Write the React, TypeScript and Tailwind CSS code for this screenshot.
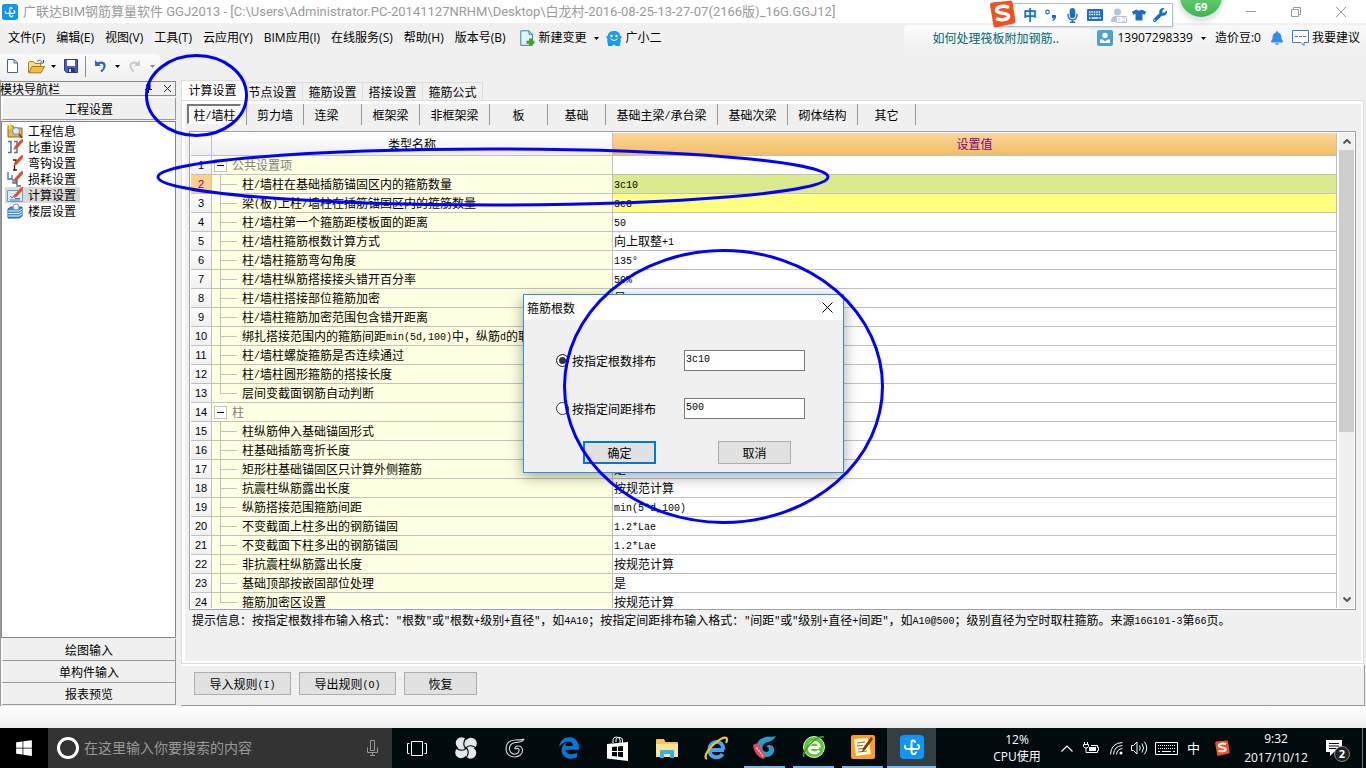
import { useState } from 'react';
import type { ReactNode } from 'react';
import clsx from 'clsx';
import { FaBell, FaEdgeLegacy, FaMicrophone, FaTshirt, FaWindows, FaWrench } from 'react-icons/fa';

const menus = ['文件(F)', '编辑(E)', '视图(V)', '工具(T)', '云应用(Y)', 'BIM应用(I)', '在线服务(S)', '帮助(H)', '版本号(B)'];

const tabs = ['计算设置', '节点设置', '箍筋设置', '搭接设置', '箍筋公式'];

const parts = [
  { name: '剪力墙', width: 'w-[58px] border-l' },
  { name: '连梁', width: 'w-[58px] pr-3' },
  { name: '框架梁', width: 'w-[58px]' },
  { name: '非框架梁', width: 'w-[70px]' },
  { name: '板', width: 'w-[58px]' },
  { name: '基础', width: 'w-[58px]' },
  { name: '基础主梁/承台梁', width: 'w-[112px]' },
  { name: '基础次梁', width: 'w-[70px]' },
  { name: '砌体结构', width: 'w-[70px]' },
  { name: '其它', width: 'w-[58px]' },
];

const rows = [
  { name: '公共设置项', group: true, value: '' },
  { name: '柱/墙柱在基础插筋锚固区内的箍筋数量', value: '3c10' },
  { name: '梁(板)上柱/墙柱在插筋锚固区内的箍筋数量', value: '3c8' },
  { name: '柱/墙柱第一个箍筋距楼板面的距离', value: '50' },
  { name: '柱/墙柱箍筋根数计算方式', value: '向上取整+1' },
  { name: '柱/墙柱箍筋弯勾角度', value: '135°' },
  { name: '柱/墙柱纵筋搭接接头错开百分率', value: '50%' },
  { name: '柱/墙柱搭接部位箍筋加密', value: '是' },
  { name: '柱/墙柱箍筋加密范围包含错开距离', value: '是' },
  { name: '绑扎搭接范围内的箍筋间距min(5d,100)中，纵筋d的取值', value: '' },
  { name: '柱/墙柱螺旋箍筋是否连续通过', value: '是' },
  { name: '柱/墙柱圆形箍筋的搭接长度', value: '' },
  { name: '层间变截面钢筋自动判断', value: '是', last: true },
  { name: '柱', group: true, value: '' },
  { name: '柱纵筋伸入基础锚固形式', value: '' },
  { name: '柱基础插筋弯折长度', value: '' },
  { name: '矩形柱基础锚固区只计算外侧箍筋', value: '是' },
  { name: '抗震柱纵筋露出长度', value: '按规范计算' },
  { name: '纵筋搭接范围箍筋间距', value: 'min(5*d,100)' },
  { name: '不变截面上柱多出的钢筋锚固', value: '1.2*Lae' },
  { name: '不变截面下柱多出的钢筋锚固', value: '1.2*Lae' },
  { name: '非抗震柱纵筋露出长度', value: '按规范计算' },
  { name: '基础顶部按嵌固部位处理', value: '是' },
  { name: '箍筋加密区设置', value: '按规范计算', last: true },
];

// Latin runs are half the width of a Chinese character
function Song({ children }: { children: string }) {
  return (
    <>
      {children.split(/([\x20-\x7e°]+)/).map((run, i) =>
        i % 2 ? (
          <span key={i} className="align-[1px] font-['Liberation_Mono'] text-[10px] leading-none">{run}</span>
        ) : (
          run
        )
      )}
    </>
  );
}

function Caret({ className = 'fill-black' }: { className?: string }) {
  return (
    <svg className={clsx('h-[3px] w-[5px] shrink-0', className)} viewBox="0 0 5 3">
      <path d="M0 0h5L2.5 3z" />
    </svg>
  );
}

function AppLogo({ className }: { className: string }) {
  return (
    <svg className={className} viewBox="0 0 24 24">
      <rect width="24" height="24" rx="4" fill="#0d95f7" />
      <g fill="none" stroke="#fff" strokeWidth="2" strokeLinecap="round">
        <path d="M5 11c-.5 2.500 1 3 3 3h9c2.500 0 3-3 1-4" />
        <path d="M15 7c-.5-2-3.500-2-3.500.5v9c0 3 3.500 3.500 4.500 1" />
      </g>
    </svg>
  );
}

function Sogou({ className }: { className: string }) {
  return (
    <svg className={className} viewBox="0 0 28 28">
      <path d="M2 5Q2 3 4 2.600L22 .8q2-.2 2.500 1.500L27.500 21q.2 2-1.500 2.500L8 27.500q-2 .3-2.500-1.500z" fill="#f4511e" />
      <path d="M21 7.500C16 5 8.500 6.500 8.500 10.200c0 4.300 12 1.800 12 6 0 3.600-8 4.600-12.500 2.300" fill="none" stroke="#fff" strokeWidth="3.600" />
    </svg>
  );
}

function TitleBar() {
  return (
    <header className="relative flex h-[23px] shrink-0 items-center bg-white pl-[2px]">
      <AppLogo className="size-4" />
      <h1 className="ml-[5px] whitespace-nowrap font-['Roboto','Noto_Sans_CJK_SC',sans-serif] text-[13px] text-[#999]">
        广联达BIM钢筋算量软件 GGJ2013 - [C:\Users\Administrator.PC-20141127NRHM\Desktop\白龙村-2016-08-25-13-27-07(2166版)_16G.GGJ12]
      </h1>
      <div className="ml-auto flex items-center gap-[35px] pr-5">
        <button aria-label="最小化" className="h-px w-[10px] bg-[#999]" />
        <button aria-label="还原">
          <svg className="size-[10px]" viewBox="0 0 10 10" fill="none" stroke="#999">
            <path d="M.5 2.500h7v7h-7zM2.500 2.500v-2h7v7h-2" />
          </svg>
        </button>
        <button aria-label="关闭">
          <svg className="size-[10px]" viewBox="0 0 10 10" fill="none" stroke="#999">
            <path d="M0 0l10 10M10 0L0 10" />
          </svg>
        </button>
      </div>

      {/* Input method bar */}
      <div className="absolute right-[193px] top-[3px] z-20 flex h-6 w-[174px] items-center border border-[#a9c0dc] bg-white pl-[14px] text-[#1a6fc4] shadow-sm">
        <Sogou className="absolute -left-[12px] -top-[4px] size-[28px]" />
        <span className="ml-[9px] w-[14px] text-[14px] font-bold leading-none">中</span>
        <svg className="ml-2 h-[12px] w-[12px]" viewBox="0 0 12 12">
          <circle cx="2.500" cy="3" r="1.800" fill="none" stroke="#1a6fc4" strokeWidth="1.200" />
          <path d="M7 6h4v2.500Q10.500 11 7.500 12l-.3-1Q8.800 10.200 8.800 9H7z" fill="#1a6fc4" />
        </svg>
        <FaMicrophone className="ml-2 size-[15px]" />
        <svg className="ml-[7px] h-[12px] w-4" viewBox="0 0 16 12" fill="none" stroke="#fff">
          <rect width="16" height="12" rx="1" fill="#1a6fc4" stroke="none" />
          <path d="M2 3h12M2 5.500h12" strokeWidth="1.500" strokeDasharray="1.500 .9" />
          <path d="M2 9h1.500m1 0h7m1 0H14" strokeWidth="1.500" />
        </svg>
        <svg className="ml-[8px] h-[15px] w-[16px]" viewBox="0 0 16 15">
          <circle cx="6.500" cy="4" r="3.500" fill="#b8c4d6" />
          <path d="M0 14c0-6 3-6 6.500-6 2 0 3 0 4 1v5z" fill="#b8c4d6" />
          <path d="M5.500 8.500h10v6h-10z" fill="#fff" stroke="#b8c4d6" />
          <path d="M8 10v3m3-3h3m-3 3h3" stroke="#b8c4d6" />
        </svg>
        <FaTshirt className="ml-[5px] size-[14px]" />
        <FaWrench className="ml-[7px] size-[14px]" />
      </div>
      <div className="absolute -top-[27px] right-[142px] z-20 flex size-[46px] items-end justify-center rounded-full border-2 border-[#e4e4e4] bg-gradient-to-b from-[#8fdc8f] to-[#36b850] pb-[4px] text-[11px] font-bold leading-[12px] text-white shadow-md">
        69
      </div>
    </header>
  );
}

function MenuBar() {
  return (
    <nav className="flex h-[31px] shrink-0 items-center whitespace-nowrap pb-px pl-2">
      <div className="flex gap-[11px]">
        {menus.map((menu) => (
          <button key={menu}>{menu}</button>
        ))}
      </div>
      <button className="ml-[14px] flex items-center">
        <svg className="h-4 w-[15px]" viewBox="0 0 15 16">
          <path d="M.8.800h8.200l3.500 3.500v11H.8z" fill="#e3f3fd" stroke="#2f84b8" />
          <path d="M9 .8v3.500h3.500" fill="none" stroke="#2f84b8" />
          <path d="M9 8.500h3v2.200h2.500v3H12V16H9v-2.300H6.500v-3H9z" fill="#3da51e" />
        </svg>
        <span className="ml-[4px]">新建变更</span>
        <span className="ml-[7px]"><Caret /></span>
      </button>
      <button className="ml-[7px] flex items-center gap-[4px]">
        <svg className="h-[15px] w-4" viewBox="0 0 16 15">
          <path d="M8 0c4 0 6 2 6.300 5l1.700.5-1.500 2.500c1 3-1 5-.5 7H10l-2-1.500L6 15H2c.5-2-1.500-4-.5-7L0 5.500 1.700 5C2 2 4 0 8 0z" fill="#1d9be8" />
          <circle cx="5.500" cy="5" r="1.200" fill="#fff" />
          <circle cx="10.500" cy="5" r="1.200" fill="#fff" />
          <path d="M4.500 7.500c1 2.500 6 2.500 7 0" fill="none" stroke="#fff" />
        </svg>
        广小二
      </button>

      <div className="ml-auto flex h-[26px] w-[187px] items-center rounded-tl bg-gradient-to-b from-[#fcfcfc] to-[#f0f0f0] pl-7 font-['Noto_Sans_CJK_SC'] text-[#006868]">
        <a href="#help">如何处理筏板附加钢筋..</a>
      </div>
      <div className="ml-px flex h-[26px] items-center bg-gradient-to-b from-[#f8f8f8] to-[#f0f0f0] pl-[5px] pr-[6px]">
        <svg className="size-4" viewBox="0 0 16 16">
          <rect width="16" height="16" rx="2" fill="#4da3cf" />
          <circle cx="8" cy="5.500" r="2.700" fill="#fff" />
          <path d="M3 13V9.500h2.500L8 11.500l2.500-2H13V13z" fill="#fff" />
        </svg>
        <span className="ml-1">13907298339</span>
        <span className="ml-2"><Caret /></span>
        <span className="ml-[9px]">造价豆:0</span>
        <FaBell className="ml-[9px] size-[14px] fill-[#2f8cf0]" />
        <svg className="ml-[8px] h-4 w-[17px]" viewBox="0 0 17 16" fill="none" stroke="#2f7fd0">
          <path d="M.5.500h16v12h-4.500v3l-3-3H.5z" fill="#fff" />
          <path d="M3 6.500h11" strokeDasharray="3 1" />
        </svg>
        <a href="#feedback" className="ml-[3px]">我要建议</a>
      </div>
    </nav>
  );
}

function ToolBar() {
  return (
    <div className="flex h-[26px] w-[160px] shrink-0 items-center rounded-r bg-gradient-to-b from-[#fbfbfb] to-[#f0f0f0] pb-[2px] pl-[7px]">
      <button aria-label="新建">
        <svg className="h-[14px] w-[11px]" viewBox="0 0 11 14">
          <path d="M.5.500h6.500l3.500 3.500v9.500H.5z" fill="#fff" stroke="#46618f" />
          <path d="M7 .5V4h3.500" fill="none" stroke="#46618f" />
        </svg>
      </button>
      <button aria-label="打开" className="ml-[10px] flex items-center gap-[6px]">
        <svg className="h-[15px] w-[17px]" viewBox="0 0 17 15">
          <path d="M.5 13.500v-10l1-1h4l1.500 2h5.500v3" fill="#f8dd84" stroke="#a87916" />
          <path d="M.8 13.800L4 7.500h12.500l-3.500 6.300z" fill="#f2bd3a" stroke="#a87916" />
          <path d="M9 2.500c2-2 4-1.500 5 .5m1.500-2v3H12" fill="none" stroke="#38588c" />
        </svg>
        <Caret />
      </button>
      <button aria-label="保存" className="ml-[8px]">
        <svg className="size-[14px]" viewBox="0 0 14 14">
          <path d="M.5.500h13v13h-11l-2-2z" fill="#4a5fc8" stroke="#2b388f" />
          <path d="M3 1h8v6H3z" fill="#fff" />
          <path d="M4 9h7v4.500H4z" fill="#28357c" />
          <path d="M5 10h2v3H5z" fill="#dfe5f8" />
        </svg>
      </button>
      <span className="ml-[7px] h-[21px] w-px bg-[#8a8a8a]" />
      <button aria-label="撤销" className="ml-[8px] flex items-center gap-[9px]">
        <svg className="h-[12px] w-[12px]" viewBox="0 0 12 12" fill="none" stroke="#2f63c4" strokeWidth="2.200">
          <path d="M2 5.500C5 1 11 2 10.500 6.500 10.300 9 8.500 10.500 7 11.500" />
          <path d="M1 0v6h6z" fill="#2f63c4" stroke="none" />
        </svg>
        <Caret />
      </button>
      <button aria-label="重做" className="ml-[9px] flex items-center gap-[9px]">
        <svg className="h-[12px] w-[12px]" viewBox="0 0 12 12" fill="none" stroke="#c8c8c8" strokeWidth="2">
          <path d="M10 5.500C7 1 1 2 1.500 6.500 1.700 9 3.500 10.500 5 11.500" />
          <path d="M11 0v6H5z" fill="#c8c8c8" stroke="none" />
        </svg>
        <Caret className="fill-[#888]" />
      </button>
    </div>
  );
}

const pencil = (
  <path d="M15.500 0L16 2.500 9.500 9.500 7 10.500 7.500 8 14 1z" fill="#e4472b" stroke="#e4472b" strokeWidth=".6" />
);

const treeItems: { name: string; icon: ReactNode }[] = [
  {
    name: '工程信息',
    icon: (
      <>
        <path d="M1 3h5l1 2h8v9H1z" fill="#e9b64a" stroke="#94671a" />
        <path d="M0 1l5 4M4 0L2 6" stroke="#ffd93b" strokeWidth="1.500" />
        <circle cx="9" cy="8" r="3.500" fill="#d8ebfb" stroke="#6d8bb0" />
        <path d="M12 11l3 4" stroke="#6b4a2a" strokeWidth="2" />
      </>
    ),
  },
  {
    name: '比重设置',
    icon: (
      <>
        <path d="M1 2.500h3v11H1M7 2.500h3v11H7" fill="none" stroke="#4a6da8" strokeWidth="1.400" />
        {pencil}
      </>
    ),
  },
  {
    name: '弯钩设置',
    icon: (
      <>
        <path d="M6 5h3v4M7.500 10v5M6 15h4" fill="none" stroke="#222" strokeWidth="1.400" />
        {pencil}
      </>
    ),
  },
  {
    name: '损耗设置',
    icon: (
      <>
        <path d="M1 1v7h4V4M6 8v4h3V9m1 0v6h4" fill="none" stroke="#4a6da8" strokeWidth="1.300" />
        {pencil}
      </>
    ),
  },
  {
    name: '计算设置',
    icon: (
      <>
        <path d="M.5 3.500h15v11H.5z" fill="#dcebfa" stroke="#6f97c9" />
        <path d="M3 9l2 2 2.500-3M8 11.500h5M3 13h10" fill="none" stroke="#3f73b8" />
        {pencil}
      </>
    ),
  },
  {
    name: '楼层设置',
    icon: (
      <>
        <path d="M1 6l3-2h11v9l-3 2H1z" fill="#3d8fd6" stroke="#1f5f9c" />
        <path d="M1 8h11l3-2M1 10.500h11l3-2M1 13h11l3-2" fill="none" stroke="#e2f1fd" />
        <circle cx="9" cy="4" r="3" fill="#e6f0f8" stroke="#8899aa" />
      </>
    ),
  },
];

function Sidebar() {
  const [selected, setSelected] = useState('计算设置');
  const bar = 'block h-[22px] w-full border-b border-r border-[#999] border-l-2 border-l-white text-center leading-[20px]';
  return (
    <aside className="flex w-[176px] shrink-0 flex-col border-l border-[#999] pb-px pt-px">
      <div className="flex h-[15px] items-center border border-l-0 border-[#888] pr-[3px]">
        <span className="-ml-px leading-none">模块导航栏</span>
        <button aria-label="固定" className="ml-auto">
          <svg className="h-[9px] w-[7px]" viewBox="0 0 7 9">
            <path d="M1.500 0h4v5H7v1H4v3H3V6H0V5h1.500z" />
          </svg>
        </button>
        <button aria-label="关闭" className="ml-[11px]">
          <svg className="size-[9px]" viewBox="0 0 9 9" stroke="#222">
            <path d="M1 1l7 7M8 1L1 8" />
          </svg>
        </button>
      </div>
      <button className="mt-px block h-[23px] w-full border border-[#999] border-l-2 border-l-white border-t-white text-center leading-[20px]">工程设置</button>
      <ul className="mt-px min-h-0 flex-1 border border-[#828790] bg-white pl-[3px] pt-px">
        {treeItems.map((item) => (
          <li key={item.name}>
            <button
              onClick={() => setSelected(item.name)}
              className={clsx('flex h-4 items-center gap-[5px] pl-[2px] pr-[4px] leading-4', selected === item.name && 'bg-[#d9d9d9]')}
            >
              <svg className="size-4" viewBox="0 0 16 16" fill="none">{item.icon}</svg>
              {item.name}
            </button>
          </li>
        ))}
      </ul>
      <div className="mt-px">
        <button className={bar}>绘图输入</button>
        <button className={bar}>单构件输入</button>
        <button className={bar}>报表预览</button>
      </div>
    </aside>
  );
}

function Branch({ last }: { last?: boolean }) {
  return (
    <span className="flex h-[19px] w-[17px] shrink-0 flex-col">
      <span className="h-[10px] border-b border-l border-[#c0c0c0]" />
      <span className={clsx('h-[9px]', !last && 'border-l border-[#c0c0c0]')} />
    </span>
  );
}

function SettingsTable() {
  const [selected, setSelected] = useState(1);
  return (
    <div className="flex min-h-0 flex-1 gap-[2px] border border-[#a0a0a8] bg-white p-px">
      <div className="min-w-0 flex-1 overflow-hidden">
        <table className="w-full table-fixed border-separate border-spacing-0">
          <colgroup>
            <col className="w-[21px]" />
            <col className="w-[401px]" />
            <col />
          </colgroup>
          <thead>
            <tr className="h-[23px]">
              <th className="border-b border-r border-[#c0c0c0] bg-gradient-to-b from-white to-[#efefef]" />
              <th className="border-b border-r border-[#c0c0c0] bg-gradient-to-b from-white to-[#efefef] font-normal">类型名称</th>
              <th className="border-b border-r border-[#c0c0c0] bg-gradient-to-b from-[#fad59c] to-[#f2be60] font-normal text-[#800080]">设置值</th>
            </tr>
          </thead>
          <tbody>
            {rows.map((row, i) => (
              <tr key={row.name} onClick={() => setSelected(i)} className="h-[19px]">
                <td
                  className={clsx(
                    "border-b border-r border-[#c0c0c0] p-0 text-center font-['Liberation_Sans'] text-[11px] leading-[18px]",
                    i === selected ? 'bg-[#ffd08a] text-[#800080]' : 'bg-gradient-to-b from-[#fdfdfd] to-[#f0f0f0]'
                  )}
                >
                  {i + 1}
                </td>
                <td className="border-b border-r border-[#c0c0c0] bg-[#ffffe1] p-0">
                  {row.group ? (
                    <div className="flex h-[18px] items-center gap-[5px] pl-[2px] text-[#808080]">
                      <button aria-label="折叠" className="flex size-[13px] items-center justify-center border border-[#c0c0c0] bg-white">
                        <span className="h-px w-[7px] bg-black" />
                      </button>
                      <span className="leading-[18px]">{row.name}</span>
                    </div>
                  ) : (
                    <div className="flex h-[18px] gap-[5px] whitespace-nowrap pl-2">
                      <Branch last={row.last} />
                      <span className="leading-[18px]"><Song>{row.name}</Song></span>
                    </div>
                  )}
                </td>
                <td
                  className={clsx(
                    'border-b border-r border-[#c0c0c0] p-0 pl-px leading-[18px]',
                    i === 1 && 'bg-[#daea8c]',
                    i === 2 && 'bg-[#ffff80]'
                  )}
                >
                  <div className="h-[18px]"><Song>{row.value}</Song></div>
                </td>
              </tr>
            ))}
          </tbody>
        </table>
      </div>
      <div className="flex w-[15px] flex-col bg-[#f0f0f0]">
        <button aria-label="向上" className="flex h-[17px] items-center justify-center">
          <svg className="h-[5px] w-[8px]" viewBox="0 0 8 5" fill="none" stroke="#555" strokeWidth="2">
            <path d="M.5 4.500L4 1l3.500 3.500" />
          </svg>
        </button>
        <div className="flex-1">
          <div className="h-[64%] bg-[#cdcdcd]" />
        </div>
        <button aria-label="向下" className="flex h-[17px] items-center justify-center">
          <svg className="h-[5px] w-[8px]" viewBox="0 0 8 5" fill="none" stroke="#555" strokeWidth="2">
            <path d="M.5.500L4 4 7.500.5" />
          </svg>
        </button>
      </div>
    </div>
  );
}

function Settings() {
  const button = 'h-[23px] border border-[#adadad] bg-[#e1e1e1] text-center leading-[20px]';
  return (
    <main className="flex min-w-0 flex-1 flex-col pr-px">
      <div className="flex h-5 items-end">
        {tabs.map((tab, i) => (
          <button
            key={tab}
            className={clsx(
              'border-t border-[#dcdcdc] leading-[18px]',
              i === 0 ? 'h-5 w-16 border-l bg-white pb-[1px] pr-[2px]' : 'h-[18px] w-[60px] border-r',
              i === 1 && '-ml-[2px]'
            )}
          >
            {tab}
          </button>
        ))}
      </div>
      <div className="mr-px flex min-h-0 flex-1 flex-col border border-[#dcdcdc]">
        <div className="flex min-h-0 flex-1 flex-col border-[3px] border-b-2 border-r-2 border-white pl-1 pr-[5px]">
          <div className="flex h-[27px] items-start">
            <button className="mr-[5px] h-5 w-[54px] -ml-[2px] border-2 border-b border-r border-[#777] border-b-white border-r-white bg-[#f8f8f8] leading-[18px]">
              <Song>柱/墙柱</Song>
            </button>
            {parts.map((part) => (
              <button key={part.name} className={clsx('h-[21px] border-r border-[#999] leading-[20px]', part.width)}>
                <Song>{part.name}</Song>
              </button>
            ))}
          </div>
          <SettingsTable />
          <p className="h-[51px] whitespace-nowrap pl-[3px] leading-[20px]">
            <Song>提示信息：按指定根数排布输入格式："根数"或"根数+级别+直径"，如4A10；按指定间距排布输入格式："间距"或"级别+直径+间距"，如A10@500；级别直径为空时取柱箍筋。来源16G101-3第66页。</Song>
          </p>
        </div>
      </div>
      <div className="flex h-[42px] shrink-0 gap-2 border-b border-r border-t-2 border-[#999] border-t-white pl-[13px] pt-[6px]">
        <button className={clsx(button, 'w-[97px]')}><Song>导入规则(I)</Song></button>
        <button className={clsx(button, 'w-[97px]')}><Song>导出规则(O)</Song></button>
        <button className={clsx(button, 'w-[73px]')}>恢复</button>
      </div>
    </main>
  );
}

function StirrupDialog() {
  const [mode, setMode] = useState('count');
  const options = [
    { id: 'count', label: '按指定根数排布', value: '3c10' },
    { id: 'spacing', label: '按指定间距排布', value: '500' },
  ];
  return (
    <section
      role="dialog"
      aria-labelledby="dialog-title"
      className="absolute left-[523px] top-[294px] z-30 w-[321px] border border-[#2f8ee0] bg-[#f0f0f0] pb-2 font-['Noto_Sans_CJK_SC',sans-serif] shadow-[0_4px_14px_rgba(0,0,0,0.35)]"
    >
      <div className="flex h-[25px] items-center justify-between bg-white pl-[3px] pr-[10px]">
        <h2 id="dialog-title">箍筋根数</h2>
        <button aria-label="关闭">
          <svg className="size-[11px]" viewBox="0 0 11 11" stroke="#000">
            <path d="M.5.500l10 10M10.500.500l-10 10" />
          </svg>
        </button>
      </div>
      <div className="flex flex-col gap-[27px] pl-8 pt-[30px]">
        {options.map((option) => (
          <div key={option.id} className="flex h-[21px] items-center">
            <input
              type="radio"
              name="mode"
              id={option.id}
              checked={mode === option.id}
              onChange={() => setMode(option.id)}
              className="size-[13px] appearance-none rounded-full border border-[#333] bg-white checked:bg-[#333] checked:shadow-[inset_0_0_0_2px_#fff]"
            />
            <label htmlFor={option.id} className="w-[115px] pl-[3px]">{option.label}</label>
            <input
              aria-label={option.label}
              defaultValue={option.value}
              className="h-[21px] w-[121px] border border-[#7a7a7a] bg-white pb-[3px] pl-px font-['Liberation_Mono'] text-[10px]"
            />
          </div>
        ))}
      </div>
      <div className="flex gap-[62px] pl-[59px] pt-[22px]">
        <button className="h-[23px] w-[73px] border-2 border-[#0078d7] bg-[#e1e1e1] leading-[18px]">确定</button>
        <button className="h-[23px] w-[73px] border border-[#adadad] bg-[#e1e1e1] leading-[20px]">取消</button>
      </div>
    </section>
  );
}

// Blue pen circles drawn over the window
function Marks() {
  return (
    <svg className="pointer-events-none absolute left-0 top-0 z-40 h-[768px] w-[1366px]" viewBox="0 0 1366 768" fill="none" stroke="#0000ff" strokeWidth="3">
      <ellipse cx="196.500" cy="95.500" rx="50" ry="40" />
      <ellipse cx="493" cy="177" rx="335" ry="28" />
      <ellipse cx="723.500" cy="386.500" rx="159" ry="136" />
    </svg>
  );
}

const apps: { name: string; icon: ReactNode; className: string }[] = [
  {
    name: '任务视图',
    className: 'w-[49px]',
    icon: (
      <svg className="h-[15px] w-5" viewBox="0 0 20 15" fill="none" stroke="#fff">
        <path d="M4.500.500h11v14h-11zM2.500 2.500h-2v10h2M17.500 2.500h2v10h-2" />
      </svg>
    ),
  },
  {
    name: '风扇',
    className: 'w-[49px]',
    icon: (
      <svg className="size-[22px]" viewBox="0 0 22 22">
        <g fill="#e4e6e8">
          <circle cx="6.500" cy="6" r="5.800" />
          <circle cx="16" cy="6.500" r="5.800" />
          <circle cx="15.500" cy="16" r="5.800" />
          <circle cx="6" cy="15.500" r="5.800" />
        </g>
        <g fill="none" stroke="#010b0e" strokeWidth="1.100">
          <path d="M11 11C7.500 9 8.500 3.500 11.500 .5" />
          <path d="M11 11c2-3.500 7.500-2.500 10.500 .5" />
          <path d="M11 11c3.500 2 2.500 7.500-.5 10.500" />
          <path d="M11 11c-2 3.500-7.500 2.500-10.500-.5" />
        </g>
      </svg>
    ),
  },
  {
    name: '浏览器',
    className: 'w-[49px]',
    icon: (
      <svg className="size-[20px]" viewBox="0 0 20 20" fill="none" stroke="#d0d0d0" strokeWidth="1.200">
        <path d="M19 1c-2 1.500-5 .5-9 1C4 2.500 1 6 1 11c0 5 4 8 8.500 8 5 0 8-3 8-6.500 0-3-2-4.500-4.500-4.500-2 0-3.500 1.500-3 3" />
        <path d="M19 1c-2 4-6 3-9 3.500C6 5.500 4 8 4.500 11.500 5 15 8 16.500 10.500 16c2.500-.5 4-2.500 3.500-4.500-.5-1.500-2.500-1.500-4-.5" />
      </svg>
    ),
  },
  { name: 'Edge', className: 'ml-[5px] w-[49px]', icon: <FaEdgeLegacy className="size-[22px] fill-[#0078d7]" /> },
  {
    name: '应用商店',
    className: 'w-[49px]',
    icon: (
      <svg className="h-[25px] w-[21px]" viewBox="0 0 21 25">
        <path d="M6 7V3.500Q6.500 1 9.500 1T13 4v3M9 6V3q1-2 4-1.500T15.500 5v2" fill="none" stroke="#fff" />
        <path d="M0 8l21-2v19L0 22.500z" fill="#fff" />
        <path d="M5 11l5-.5v4.500H5zm6-.6l5-.5V15h-5zM5 16h5v4.500l-5-.5zm6 0h5v5.300l-5-.7z" fill="#000" />
      </svg>
    ),
  },
  {
    name: '文件资源管理器',
    className: 'w-[49px]',
    icon: (
      <svg className="h-[19px] w-[22px]" viewBox="0 0 22 19">
        <path d="M0 1q0-1 1-1h7l1.500 3H21q1 0 1 1v14H0z" fill="#f5c64e" />
        <path d="M0 5h22v13H0z" fill="#fde596" />
        <path d="M4 19v-7q0-1 1-1h12q1 0 1 1v7h-4v-4H8v4z" fill="#36b2e8" />
      </svg>
    ),
  },
  {
    name: 'Internet Explorer',
    className: 'w-[49px]',
    icon: (
      <svg className="size-[25px]" viewBox="0 0 25 25" fill="none">
        <path d="M21 14H8M20.500 13.500C20 3 7 4 6.500 13.500c0 9.500 10.500 9.500 13 4.500" stroke="#42a5ee" strokeWidth="4" />
        <path d="M4 23C-3 20 17-1 23.500 2c1 1.500.5 3-.5 5" stroke="#f4c21d" strokeWidth="2.200" />
      </svg>
    ),
  },
  {
    name: '广联达G',
    className: 'mx-1 w-[41px] border-b-2 border-[#76b9ed]',
    icon: (
      <svg className="size-[24px]" viewBox="0 0 24 24" fill="none">
        <path d="M23 1c-3 1.500-6 0-10 1C6 3.500 3 8 4 13.500 5 19 9 22 14 22c5-.5 8-4.500 7-8.500-1-4-7-4.500-7.500-1.500 3 0 3.500 4.500.5 5-3.500.5-5.500-3-4-6.500C12 6 20 8 23 1z" fill="#2a9ccc" />
        <path d="M0 10l4.500-2L13 22l-3 2Q1 20 0 10z" fill="#e8435a" />
        <path d="M3.500 12.500l6.500 9" stroke="#fbd5da" strokeWidth="1.500" strokeDasharray="2 1" />
      </svg>
    ),
  },
  {
    name: '360',
    className: 'mx-1 w-[41px] border-b-2 border-[#76b9ed]',
    icon: (
      <svg className="size-[24px]" viewBox="0 0 24 24" fill="none">
        <circle cx="12" cy="12" r="10.500" fill="#5cc62a" stroke="#d8f4c8" />
        <path d="M17 12.500H8M17.500 12.500C17 5.500 8 5 7 12.500c0 6.500 8 6.500 10 3" stroke="#fff" strokeWidth="2.800" />
        <path d="M2 22C-1 17 14 0 22 2" stroke="#3aa318" strokeWidth="1.500" />
      </svg>
    ),
  },
  {
    name: '记事',
    className: 'mx-1 w-[41px] border-b-2 border-[#76b9ed]',
    icon: (
      <svg className="size-[24px]" viewBox="0 0 24 24">
        <rect width="24" height="24" rx="2" fill="#f7a11d" />
        <path d="M3 4l14-1 3 16-15 2z" fill="#fff7dc" />
        <path d="M6 8l8-1M6 11l6-.5M7 14l5-.5M7 17l9-1" stroke="#8b6a32" />
        <path d="M20 2l2 2-8 11-3 2 1-4z" fill="#7a3e10" />
      </svg>
    ),
  },
  { name: 'GGJ2013', className: 'w-[49px] border-b-2 border-[#76b9ed] bg-[#343f43]', icon: <AppLogo className="size-6" /> },
];

function TaskBar() {
  return (
    <footer className="flex h-10 shrink-0 bg-[#010b0e] text-white">
      <button aria-label="开始" className="flex w-12 items-center justify-center bg-black">
        <FaWindows className="size-[18px]" />
      </button>
      <label className="flex w-[344px] items-center bg-[#333] pl-[9px] pr-[14px]">
        <span className="size-[22px] shrink-0 rounded-full border-[3px] border-white" />
        <input
          aria-label="搜索"
          placeholder="在这里输入你要搜索的内容"
          className="ml-[5px] min-w-0 flex-1 bg-transparent text-[14px] placeholder:text-[#999]"
        />
        <svg className="h-4 w-[11px]" viewBox="0 0 11 16" fill="none" stroke="#999">
          <path d="M3.500.500h4v10h-4zM.5 7.500v5h10v-5M5.500 12.500v3M3 15.500h5" />
        </svg>
      </label>
      {apps.map((app) => (
        <button key={app.name} aria-label={app.name} className={clsx('flex items-center justify-center', app.className)}>
          {app.icon}
        </button>
      ))}
      <div className="ml-auto flex items-center">
        <div className="w-[50px] text-center leading-[17px]">
          12%
          <br />
          CPU使用
        </div>
        <svg className="ml-[19px] h-[7px] w-[12px]" viewBox="0 0 12 7" fill="none" stroke="#fff" strokeWidth="1.200">
          <path d="M.5 6.500L6 1l5.500 5.500" />
        </svg>
        <svg className="ml-[10px] h-[12px] w-4" viewBox="0 0 16 12" fill="none" stroke="#fff">
          <path d="M1.500 0v2M4.500 0v2M.5 2.500h5v2l-1.500 1.500H2L.5 4.500zM3 6v4.500h11.500v-2H15.500v-3h-1v-2H8" />
          <path d="M6 5h7v4H6z" fill="#fff" stroke="none" />
        </svg>
        <svg className="ml-[11px] size-[13px]" viewBox="0 0 13 13" fill="none" stroke="#fff">
          <path d="M.5 12.500Q1 1 12.500.500M3.500 12.500Q4 4 12.500 3.500M6.500 12.500Q7 7 12.500 6.500" />
          <circle cx="11" cy="11" r="1.500" fill="#fff" stroke="none" />
        </svg>
        <svg className="ml-[8px] h-[14px] w-[17px]" viewBox="0 0 17 14" fill="none" stroke="#fff">
          <path d="M.5 4.500h2l3.500-3.500v12L2.500 9.500h-2zM8.500 4.500q1.500 2.500 0 5M11 2.500q3 4.500 0 9M13.500.800q4.500 6.200 0 12.400" />
        </svg>
        <svg className="ml-[7px] h-[13px] w-[23px]" viewBox="0 0 23 13" fill="none" stroke="#fff">
          <path d="M.5.500h22v12H.5z" />
          <path d="M3 3.500h17M3 6.500h17" strokeDasharray="1 1" />
          <path d="M3 9.500h2m2 0h9m2 0h2" />
        </svg>
        <span className="ml-[9px] text-[13px] leading-none">中</span>
        <Sogou className="ml-[14px] size-4" />
        <div className="ml-[12px] w-[68px] text-center leading-[19px]">
          9:32
          <br />
          2017/10/12
        </div>
        <button aria-label="通知" className="relative ml-4 mr-[9px] w-[27px]">
          <svg className="h-[17px] w-4" viewBox="0 0 16 17">
            <path d="M0 0h16v12H8l-4 4v-4H0z" fill="#fff" />
            <path d="M3 3.500h10M3 6h10M3 8.500h7" stroke="#000" />
          </svg>
          <span className="absolute left-2 top-[6px] flex size-4 items-center justify-center rounded-full border border-[#888] bg-[#222] text-[11px] font-bold">2</span>
        </button>
        <span className="mr-[3px] h-10 w-px bg-[#777]" />
      </div>
    </footer>
  );
}

export default function App() {
  return (
    <div className="relative flex h-screen w-full flex-col overflow-hidden bg-[#f0f0f0] font-['Open_Sans','Noto_Sans_CJK_SC',sans-serif] text-[12px] leading-[16px] text-black">
      <TitleBar />
      <MenuBar />
      <ToolBar />
      <div className="flex min-h-0 flex-1 gap-[5px] font-['Noto_Sans_CJK_SC',sans-serif]">
        <Sidebar />
        <Settings />
      </div>
      <div className="h-[22px] shrink-0 bg-gradient-to-b from-white to-[#eee]" />
      <TaskBar />
      <StirrupDialog />
      <Marks />
    </div>
  );
}
